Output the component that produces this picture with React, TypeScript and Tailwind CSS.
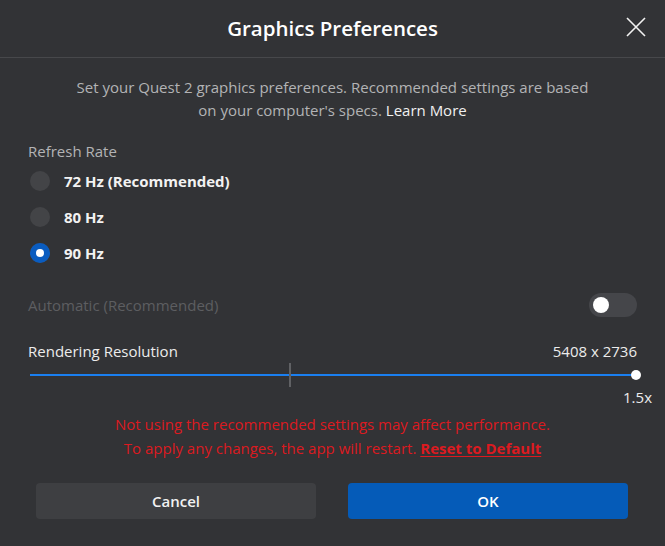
import { useState } from "react";

const rates = ["72 Hz (Recommended)", "80 Hz", "90 Hz"];

const GraphicsPreferences = () => {
  const [rate, setRate] = useState(2);
  const [auto, setAuto] = useState(false);

  return (
    <div className="w-[665px] h-[546px] bg-[#323336] font-['Open_Sans',sans-serif] select-none overflow-hidden">
      <div className="relative h-[58px] flex items-center justify-center border-b border-[#47484b]">
        <h1 className="text-[20.5px] font-semibold text-white">
          Graphics Preferences
        </h1>
        <button className="absolute left-[626px] top-[17px] w-[20px] h-[20px]">
          <svg width="20" height="20" viewBox="0 0 20 20">
            <path
              d="M1 1L19 19M19 1L1 19"
              stroke="#f2f2f2"
              strokeWidth="1.6"
              fill="none"
            />
          </svg>
        </button>
      </div>

      <div className="px-[28px]">
        <p className="mt-[18px] text-center text-[15px] leading-[23px] text-[#b3b3b5]">
          Set your Quest 2 graphics preferences. Recommended settings are based
          <br />
          on your computer's specs.{" "}
          <span className="text-[#f0f0f0]">Learn More</span>
        </p>

        <div className="mt-[19px] h-[20px] flex items-center text-[15px] text-[#b3b3b5]">
          Refresh Rate
        </div>

        <div className="mt-[2px] flex flex-col">
          {rates.map((r, i) => (
            <div
              key={r}
              className="h-[36px] flex items-center cursor-pointer"
              onClick={() => setRate(i)}
            >
              <div className="ml-[2px] w-[20px] h-[20px] rounded-full flex items-center justify-center bg-[#434447]">
                {rate === i && (
                  <div className="w-[20px] h-[20px] rounded-full bg-[#0a5cc0] flex items-center justify-center">
                    <div className="w-[8px] h-[8px] rounded-full bg-white" />
                  </div>
                )}
              </div>
              <span className="ml-[14px] text-[15px] font-bold text-[#f2f2f2]">
                {r}
              </span>
            </div>
          ))}
        </div>

        <div className="mt-[22px] h-[24px] flex items-center justify-between">
          <span className="text-[15px] text-[#5d5e61]">
            Automatic (Recommended)
          </span>
          <button
            onClick={() => setAuto(!auto)}
            className="w-[48px] h-[24px] rounded-full bg-[#45464a] flex items-center px-[4px]"
          >
            <div className="w-[16px] h-[16px] rounded-full bg-white" />
          </button>
        </div>

        <div className="mt-[24px] h-[20px] flex items-center justify-between text-[15px] text-[#ececec]">
          <span>Rendering Resolution</span>
          <span>5408 x 2736</span>
        </div>

        <div className="relative mt-[2px] h-[24px] ml-[2px] mr-[1px]">
          <div className="absolute left-0 right-0 top-[11px] h-[2px] bg-[#1a7ff0]" />
          <div className="absolute left-[259px] top-0 w-[2px] h-[24px] bg-[#606164]" />
          <div className="absolute right-[-5px] top-[7px] w-[10px] h-[10px] rounded-full bg-white" />
        </div>

        <div className="-mr-[15px] h-[20px] flex items-center justify-end text-[15px] text-[#ececec]">
          1.5x
        </div>

        <p className="mt-[5px] text-center text-[15px] leading-[24px] text-[#dc1a20]">
          Not using the recommended settings may affect performance.
          <br />
          To apply any changes, the app will restart.{" "}
          <span className="font-bold underline underline-offset-2">
            Reset to Default
          </span>
        </p>
      </div>

      <div className="mt-[23px] pl-[36px] pr-[37px] flex gap-[32px]">
        <button className="w-[280px] h-[36px] rounded-[4px] bg-[#3e3f42] text-[15px] font-semibold text-[#f2f2f2]">
          Cancel
        </button>
        <button className="w-[280px] h-[36px] rounded-[4px] bg-[#055bb8] text-[15px] font-semibold text-white">
          OK
        </button>
      </div>
    </div>
  );
};

export default function App() {
  return <GraphicsPreferences />;
}
